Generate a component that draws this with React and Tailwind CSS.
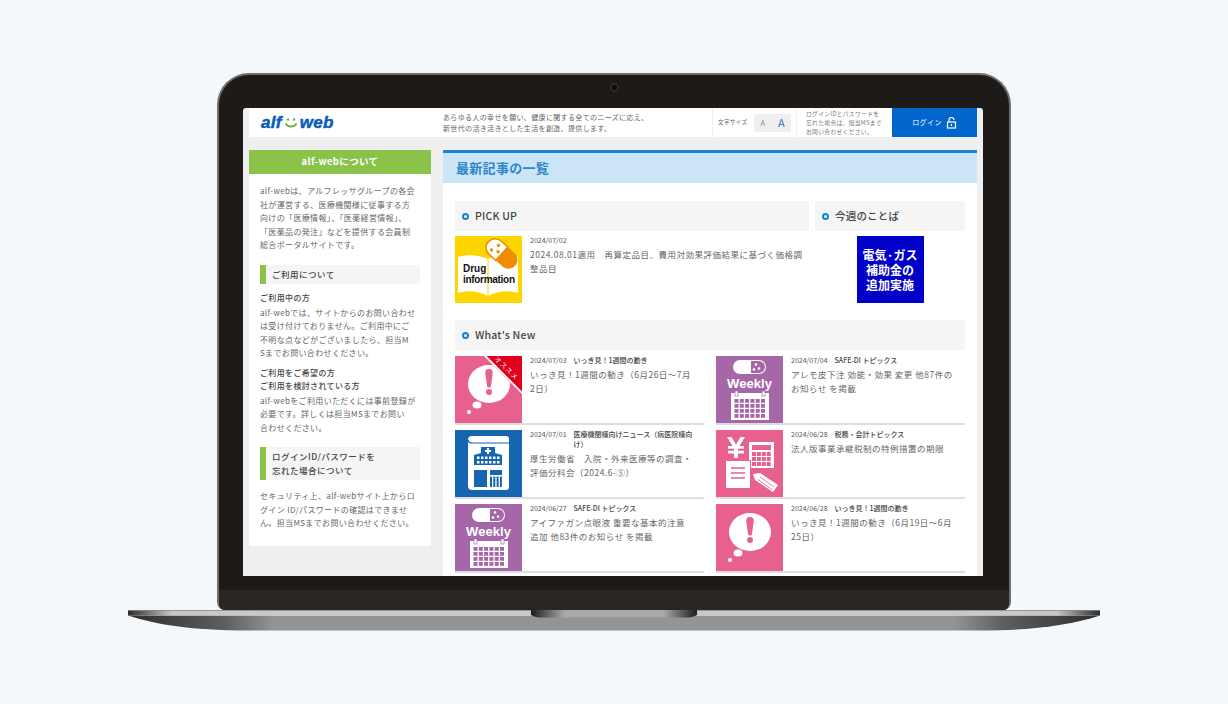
import { Fragment } from 'react'

const jp = { fontFamily: '"Noto Sans CJK JP", "Noto Sans", sans-serif' }

function Bubble() {
    return (
        <>
            <ellipse cx="34" cy="28" rx="21" ry="19" fill="#fff" />
            <path d="M34 13c3 0 4 2 3.700 4.500L36 30c-.3 2-3.700 2-4 0l-1.700-12.500C30 15 31 13 34 13z" fill="#e8608f" />
            <circle cx="34" cy="36" r="3" fill="#e8608f" />
            <ellipse cx="22" cy="49" rx="4.500" ry="3.500" fill="#fff" />
            <circle cx="14" cy="56" r="2" fill="#fff" />
        </>
    )
}

function Thumb({ kind, badge }) {
    if (kind === 'drug') {
        return (
            <svg width="67" height="67" viewBox="0 0 67 67" className="shrink-0">
                <rect width="67" height="67" fill="#ffd500" />
                <path d="M3 21c10-3 21-2 30 2 9-4 20-5 30-2v36c-10-3-21-2-30 3-9-5-20-6-30-3z" fill="#fff" />
                <path d="M33 23v37" stroke="#ffd500" strokeWidth="1" />
                <g transform="translate(8 -6) rotate(42 38 23)">
                    <rect x="21" y="14" width="36" height="18" rx="9" fill="#f08c00" />
                    <path d="M30 14h9v18h-9a9 9 0 0 1 0-18z" fill="#fff" stroke="#f08c00" strokeWidth="1.500" />
                    <circle cx="31" cy="19" r="1.700" fill="#f08c00" />
                    <circle cx="35" cy="24" r="1.700" fill="#f08c00" />
                    <circle cx="29" cy="27" r="1.700" fill="#f08c00" />
                </g>
                <text x="8" y="36" fontSize="10" fontWeight="700" fill="#111" fontFamily="Liberation Sans, sans-serif">Drug</text>
                <text x="8" y="47" fontSize="10" fontWeight="700" fill="#111" fontFamily="Liberation Sans, sans-serif" textLength="52">information</text>
            </svg>
        )
    }
    if (kind === 'alert') {
        return (
            <div className="relative h-[67px] w-[67px] shrink-0 overflow-hidden bg-[#e8608f]">
                <svg width="67" height="67" viewBox="0 0 67 67" className="block">
                    <Bubble />
                </svg>
                {badge && (
                    <div className="absolute left-[17px] top-[-8px] flex h-[30px] w-[80px] rotate-45 items-end justify-center border-b-2 border-white bg-[#e0001b] pb-[1px] text-[6.500px] leading-[9px] tracking-[1px] text-white" style={jp}>
                        オススメ
                    </div>
                )}
            </div>
        )
    }
    if (kind === 'hospital') {
        return (
            <svg width="67" height="67" viewBox="0 0 67 67" className="shrink-0">
                <rect width="67" height="67" fill="#1565b0" />
                <path d="M13 10a4 4 0 0 1 4-4h34a3 3 0 0 1 3 3v48a3 3 0 0 1-3 3H17a4 4 0 0 1-4-4z" fill="#fff" />
                <path d="M13 10a4 4 0 0 0 4 3h37" fill="none" stroke="#1565b0" strokeWidth="1.200" />
                <path d="M19 25l7-2v-6h14v6l7 2v10H19z" fill="#1565b0" />
                <path d="M32 18h2v2h2v2h-2v2h-2v-2h-2v-2h2z" fill="#fff" />
                <g fill="#fff">
                    {[23, 27, 31, 35, 39, 43].map((x) => (
                        <Fragment key={x}>
                            <rect x={x - 1} y="26.500" width="2.500" height="2.500" />
                            <rect x={x - 1} y="31" width="2.500" height="2.500" />
                        </Fragment>
                    ))}
                </g>
                <rect x="19" y="40" width="13" height="17" fill="#1565b0" />
                <path d="M35 40h12v5H35z" fill="#1565b0" />
                <g fill="#1565b0">
                    {[35, 38.300, 41.600, 44.900].map((x) => (
                        <rect key={x} x={x} y="46.500" width="2" height="10.500" />
                    ))}
                </g>
            </svg>
        )
    }
    if (kind === 'weekly') {
        return (
            <svg width="67" height="67" viewBox="0 0 67 67" className="shrink-0">
                <rect width="67" height="67" fill="#a567a8" />
                <rect x="17" y="4" width="33" height="14" rx="7" fill="#fff" />
                <path d="M35 5h8a6 6 0 0 1 6 6v0a6 6 0 0 1-6 6h-8z" fill="#a567a8" />
                <circle cx="40" cy="8.500" r="1.300" fill="#fff" />
                <circle cx="43" cy="12.500" r="1.300" fill="#fff" />
                <circle cx="38" cy="13.500" r="1.300" fill="#fff" />
                <text x="33.500" y="32" textAnchor="middle" fontSize="13" fontWeight="700" fill="#fff" fontFamily="Liberation Sans, sans-serif" textLength="45">Weekly</text>
                <rect x="15" y="37" width="38" height="27" fill="#fff" />
                <rect x="19" y="35" width="3" height="5" fill="#fff" stroke="#a567a8" strokeWidth=".7" />
                <rect x="46" y="35" width="3" height="5" fill="#fff" stroke="#a567a8" strokeWidth=".7" />
                <g fill="#a567a8">
                    {[0, 1, 2, 3, 4, 5].map((c) =>
                        [0, 1, 2, 3].map((r) => (
                            <rect key={`${c}-${r}`} x={18.500 + c * 5.300} y={43 + r * 5} width="4" height="3.800" />
                        ))
                    )}
                </g>
            </svg>
        )
    }
    return (
        <svg width="67" height="67" viewBox="0 0 67 67" className="shrink-0">
            <rect width="67" height="67" fill="#e8608f" />
            <path d="M11 7h4.500l4.500 7.500L24.500 7H29l-5.500 9H28v2.700h-6v2.100h6v2.700h-6V28h-4v-4.500h-6v-2.700h6v-2.100h-6V16h4.500z" fill="#fff" />
            <rect x="33" y="12" width="25" height="26" fill="#fff" />
            <rect x="36" y="15" width="19" height="5" fill="#e8608f" />
            <g fill="#e8608f">
                {[0, 1, 2, 3].map((c) =>
                    [0, 1, 2].map((r) => (
                        <rect key={`${c}-${r}`} x={36 + c * 4.900} y={22 + r * 5} width="4" height="4" />
                    ))
                )}
            </g>
            <rect x="9.500" y="30.500" width="25" height="28" fill="#fff" stroke="#e8608f" strokeWidth="1" />
            <path d="M15 38h14M15 43h14M15 48h14" stroke="#e8608f" strokeWidth="1.500" />
            <path d="M37 44l7-1 18 12-5 7-18-12z" fill="#fff" />
            <path d="M44 47l14 10M42 49.500l14 10" stroke="#e8608f" strokeWidth=".8" />
        </svg>
    )
}

function SectionBar({ children, className }) {
    return (
        <div className={`flex h-[30px] items-center gap-[6px] rounded-[2px] bg-[#f5f5f5] pl-[7px] text-[10.500px] font-medium tracking-[0.2px] text-[#444] ${className}`} style={jp}>
            <span className="h-[7px] w-[7px] rounded-full border-2 border-[#1583d2]" />
            {children}
        </div>
    )
}

function SideHead({ children }) {
    return (
        <div className="flex items-center border-l-[6px] border-[#8bc34a] bg-[#f5f5f5] py-[3px] pl-[6px] text-[8.500px] font-medium leading-[13.500px] tracking-[0.5px] text-[#444]">
            {children}
        </div>
    )
}

function NewsItem({ kind, badge, date, cat, title }) {
    return (
        <div className="flex h-[69px] gap-[8px] border-b-2 border-[#dedede]">
            <Thumb kind={kind} badge={badge} />
            <div className="min-w-0 flex-1 pr-[8px]">
                <div className="mt-[-1px] flex gap-[7px] text-[7px] leading-[10px] text-[#555]">
                    <span className="shrink-0">{date}</span>
                    <span className="font-medium text-[#444]">{cat}</span>
                </div>
                <div className="mt-[1.500px] text-[8.500px] leading-[14px] tracking-[0.5px] text-[#666]">{title}</div>
            </div>
        </div>
    )
}

const news = [
    { kind: 'alert', badge: true, date: '2024/07/03', cat: 'いっき見！1週間の動き', title: 'いっき見！1週間の動き（6月26日〜7月2日）' },
    { kind: 'weekly', date: '2024/07/04', cat: 'SAFE-DI トピックス', title: 'アレモ皮下注 効能・効果 変更 他87件のお知らせ を掲載' },
    { kind: 'hospital', date: '2024/07/01', cat: '医療機関様向けニュース（病医院様向け）', title: '厚生労働省　入院・外来医療等の調査・評価分科会（2024.6-⑤）' },
    { kind: 'yen', date: '2024/06/28', cat: '税務・会計トピックス', title: '法人版事業承継税制の特例措置の期限' },
    { kind: 'weekly', date: '2024/06/27', cat: 'SAFE-DI トピックス', title: 'アイファガン点眼液 重要な基本的注意 追加 他83件のお知らせ を掲載' },
    { kind: 'alert', date: '2024/06/28', cat: 'いっき見！1週間の動き', title: 'いっき見！1週間の動き（6月19日〜6月25日）' },
]

function Header() {
    return (
        <div className="mx-[6px] flex h-[29px] items-stretch bg-white" style={jp}>
            <div className="flex w-[194px] items-center pl-[12px]">
                <span className="flex items-center text-[17px] font-black italic leading-none tracking-[0.3px] text-[#0a5cb8] [-webkit-text-stroke:0.5px_#0a5cb8]" style={{ fontFamily: '"Liberation Sans", sans-serif' }}>
                    alf
                    <svg width="14" height="12" viewBox="0 0 14 12" className="mx-[2px]">
                        <circle cx="4" cy="2.500" r="1.200" fill="#63b54a" />
                        <circle cx="10" cy="2.500" r="1.200" fill="#63b54a" />
                        <path d="M1.500 6.500c2 4 9 4 11 0" fill="none" stroke="#63b54a" strokeWidth="1.800" />
                    </svg>
                    web
                </span>
            </div>
            <div className="flex w-[269px] flex-col justify-center text-[7px] leading-[11px] tracking-[0.35px] text-[#666]">
                <div>あらゆる人の幸せを願い、健康に関する全てのニーズに応え、</div>
                <div>新世代の活き活きとした生活を創造、提供します。</div>
            </div>
            <div className="flex w-[85px] items-center border-x border-[#eeeeee] pl-[5px] text-[5.500px] tracking-[0.4px] text-[#666]">
                <span className="w-[36px]">文字サイズ</span>
                <span className="flex h-[18px] w-[18px] items-center justify-center bg-[#efefef] text-[7.500px] text-[#888]">A</span>
                <span className="flex h-[18px] w-[19px] items-center justify-center bg-[#efefef] text-[11px] text-[#3a6ec4]">A</span>
            </div>
            <div className="flex w-[95px] flex-col justify-center pl-[9px] text-[5.800px] leading-[9px] tracking-[0.3px] text-[#777]">
                <div>ログインIDとパスワードを</div>
                <div>忘れた場合は、担当MSまで</div>
                <div>お問い合わせください。</div>
            </div>
            <div className="flex flex-1 items-center justify-center gap-[4px] bg-[#0066cc] text-[7px] tracking-[0.4px] text-white">
                ログイン
                <svg width="11" height="12" viewBox="0 0 11 12" fill="none" stroke="#fff" strokeWidth="1.200">
                    <rect x="1.500" y="5" width="8" height="6" />
                    <path d="M3 5V3a2.500 2.500 0 0 1 5 0" />
                    <path d="M5.500 7v2" />
                </svg>
            </div>
        </div>
    )
}

function Sidebar() {
    return (
        <div className="h-[396px] w-[182px] shrink-0 bg-white text-[8px] leading-[13.500px] tracking-[0.35px] text-[#666]">
            <div className="flex h-[24px] items-center justify-center bg-[#8bc34a] text-[9.500px] font-bold text-white">alf-webについて</div>
            <div className="px-[11px] pt-[10px]">
                <p className="whitespace-nowrap">
                    alf-webは、アルフレッサグループの各会<br />
                    社が運営する、医療機関様に従事する方<br />
                    向けの「医療情報」、「医薬経営情報」、<br />
                    「医薬品の発注」などを提供する会員制<br />
                    総合ポータルサイトです。
                </p>
                <div className="mt-[13px]">
                    <SideHead>ご利用について</SideHead>
                </div>
                <p className="mt-[7px] font-medium text-[#444]">ご利用中の方</p>
                <p className="mt-[1px] whitespace-nowrap">
                    alf-webでは、サイトからのお問い合わせ<br />
                    は受け付けておりません。ご利用中にご<br />
                    不明な点などがございましたら、担当M<br />
                    Sまでお問い合わせください。
                </p>
                <p className="mt-[6px] font-medium text-[#444]">ご利用をご希望の方<br />ご利用を検討されている方</p>
                <p className="mt-[1px] whitespace-nowrap">
                    alf-webをご利用いただくには事前登録が<br />
                    必要です。詳しくは担当MSまでお問い<br />
                    合わせください。
                </p>
                <div className="mt-[13px]">
                    <SideHead>ログインID/パスワードを<br />忘れた場合について</SideHead>
                </div>
                <p className="mt-[9px] whitespace-nowrap">
                    セキュリティ上、alf-webサイト上からロ<br />
                    グイン ID/パスワードの確認はできませ<br />
                    ん。担当MSまでお問い合わせください。
                </p>
            </div>
        </div>
    )
}

function Main() {
    return (
        <div className="w-[534px] shrink-0 bg-white">
            <div className="flex h-[33px] items-center border-t-[3px] border-[#1583d8] bg-[#cbe5f7] pl-[13px] text-[13px] font-bold tracking-[0.3px] text-[#2b86c9]">
                最新記事の一覧
            </div>
            <div className="h-[400px] px-[12px] pt-[18px]">
                <div className="flex gap-[6px]">
                    <div className="w-[354px]">
                        <SectionBar>PICK UP</SectionBar>
                        <div className="mt-[5px] flex gap-[8px]">
                            <Thumb kind="drug" />
                            <div className="pr-[5px]">
                                <div className="mt-[-1px] text-[7px] leading-[10px] text-[#555]">2024/07/02</div>
                                <div className="mt-[1.500px] text-[8.500px] leading-[14px] tracking-[0.5px] text-[#666]">2024.08.01適用　再算定品目、費用対効果評価結果に基づく価格調整品目</div>
                            </div>
                        </div>
                    </div>
                    <div className="w-[150px]">
                        <SectionBar>今週のことば</SectionBar>
                        <div className="mx-auto mt-[5px] flex h-[67px] w-[67px] items-center justify-center bg-[#0000c8] text-center text-[12px] font-bold leading-[15px] text-white">
                            <div>電気·ガス<br />補助金の<br />追加実施</div>
                        </div>
                    </div>
                </div>
                <SectionBar className="mt-[17px]">What's New</SectionBar>
                <div className="mt-[6px] grid grid-cols-[249px_249px] gap-x-[12px] gap-y-[5px]">
                    {news.map((item) => (
                        <NewsItem key={item.date + item.title} {...item} />
                    ))}
                </div>
            </div>
        </div>
    )
}

function Base() {
    return (
        <svg width="972" height="21" viewBox="0 0 972 21" className="block">
            <defs>
                <linearGradient id="stripGrad" x1="0" x2="1" y1="0" y2="0">
                    <stop offset="0" stopColor="#2b2b2b" />
                    <stop offset="0.045" stopColor="#c8c8c8" />
                    <stop offset="0.955" stopColor="#c8c8c8" />
                    <stop offset="1" stopColor="#2b2b2b" />
                </linearGradient>
                <linearGradient id="bodyGrad" x1="0" x2="1" y1="0" y2="0">
                    <stop offset="0" stopColor="#2e2e2e" />
                    <stop offset="0.1" stopColor="#5e5e5e" />
                    <stop offset="0.15" stopColor="#949494" />
                    <stop offset="0.85" stopColor="#949494" />
                    <stop offset="0.9" stopColor="#5e5e5e" />
                    <stop offset="1" stopColor="#2e2e2e" />
                </linearGradient>
                <linearGradient id="notchGrad" x1="0" x2="1" y1="0" y2="0">
                    <stop offset="0" stopColor="#1c1c1c" />
                    <stop offset="0.2" stopColor="#a8a8a8" />
                    <stop offset="0.8" stopColor="#a8a8a8" />
                    <stop offset="1" stopColor="#1c1c1c" />
                </linearGradient>
            </defs>
            <path d="M0 5.500h972c-30 10-70 15-120 15H120C70 20.500 30 15.500 0 5.500z" fill="url(#bodyGrad)" />
            <rect x="0" y="0" width="972" height="5.500" fill="url(#stripGrad)" />
            <rect x="0" y="0" width="972" height=".8" fill="#8a8a8a" />
            <path d="M403 0h166v5c-4 2-6 2.500-10 2.500H413c-4 0-6-.5-10-2.500z" fill="url(#notchGrad)" />
        </svg>
    )
}

export default function App() {
    return (
        <div className="flex h-[704px] w-[1228px] flex-col items-center overflow-hidden bg-[#f4f8fb] pt-[73px]">
            <div className="flex h-[537px] w-[794px] flex-col items-center rounded-t-[32px] rounded-b-[8px] border-x-2 border-t-2 border-[#6e6e6e] bg-[#1e1a17]">
                <div className="mt-[8px] h-[9px] w-[9px] rounded-full border-2 border-[#2f2b28] bg-[#0b0b0b]" />
                <div className="ml-[24px] mt-[16px] h-[468px] w-[740px] self-start overflow-hidden rounded-t-[3px] bg-[#efefef]" style={jp}>
                    <Header />
                    <div className="mx-[6px] mt-[13px] flex items-start gap-[12px]">
                        <Sidebar />
                        <Main />
                    </div>
                </div>
                <div className="mt-[14px] h-[20px] w-full rounded-b-[6px] bg-[#2a2623]" />
            </div>
            <Base />
        </div>
    )
}
